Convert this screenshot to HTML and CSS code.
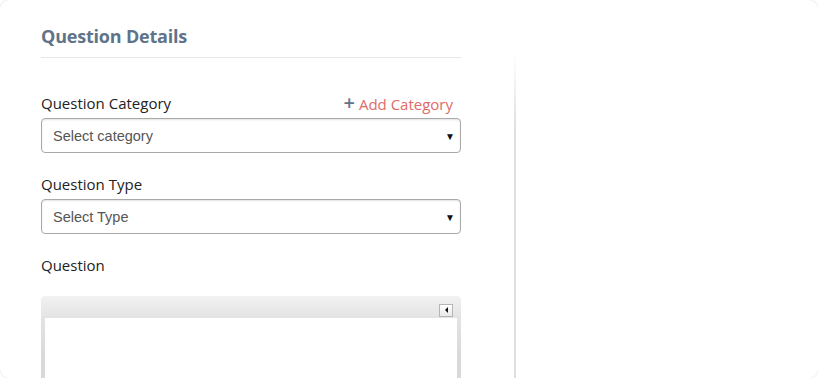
FILE: index.html
```html
<!DOCTYPE html>
<html>
<head>
    <title>Question Details</title>
    <link rel="stylesheet" href="styles.css">
</head>
<body>
    <div class="card">
        <div class="form-col">
            <h3 class="section-title">Question Details</h3>

            <div class="field field-first">
                <div class="label-row">
                    <label for="questionCategory">Question Category</label>
                    <a href="#" class="add-link"><span class="plus">+</span> Add Category</a>
                </div>
                <div class="select-box">
                    <span class="select-text">Select category</span>
                    <span class="select-arrow">&#9660;</span>
                </div>
            </div>

            <div class="field">
                <div class="label-row">
                    <label for="questionType">Question Type</label>
                </div>
                <div class="select-box">
                    <span class="select-text">Select Type</span>
                    <span class="select-arrow">&#9660;</span>
                </div>
            </div>

            <div class="field">
                <div class="label-row">
                    <label>Question</label>
                </div>
            </div>

            <!-- rich text editor -->
            <div class="editor">
                <div class="editor-toolbar">
                    <span class="collapse-btn">
                        <svg width="5" height="6" viewBox="0 0 5 6"><path d="M4 0 L1 3 L4 6 Z" fill="#111"/></svg>
                    </span>
                </div>
                <div class="editor-body"></div>
            </div>
        </div>

        <div class="side-col"></div>
    </div>
</body>
</html>
```

FILE: styles.css
```css
html, body {
    height: 100%;
}

body {
    margin: 0;
    background-color: #fff;
    font-family: "Open Sans", Arial, sans-serif;
}

.card {
    box-sizing: border-box;
    height: 100%;
    display: flex;
    padding-left: 41px;
    border-radius: 9px;
    box-shadow: 0 0 2px rgba(0, 0, 0, 0.18);
    overflow: hidden;
}

.form-col {
    width: 420px;
    padding-top: 24px;
}

.section-title {
    margin: 0;
    padding-bottom: 9px;
    font-size: 18px;
    line-height: 24px;
    font-weight: 700;
    color: #5f7389;
    border-bottom: 1px solid #e6e6e6;
    letter-spacing: -0.2px;
}

.field {
    margin-top: 20px;
}

.field-first {
    margin-top: 34px;
}

.label-row {
    display: flex;
    justify-content: space-between;
    align-items: center;
    height: 22px;
    margin-bottom: 4px;
}

label {
    font-size: 15px;
    color: #222;
}

.add-link {
    font-size: 15px;
    color: #e06a68;
    text-decoration: none;
    margin-right: 8px;
}

.add-link .plus {
    color: #5f7389;
    font-size: 20px;
    font-weight: 600;
    line-height: 1;
}

.select-box {
    box-sizing: border-box;
    height: 35px;
    display: flex;
    align-items: center;
    justify-content: space-between;
    padding: 0 5px 0 11px;
    border: 1px solid #a9a9a9;
    border-radius: 4px;
    box-shadow: inset 0 1px 2px rgba(0, 0, 0, 0.12);
    background-color: #fff;
}

.select-text {
    font-family: "Liberation Sans", Arial, sans-serif;
    font-size: 14.5px;
    color: #555;
}

.select-arrow {
    font-size: 10px;
    color: #111;
}

.editor {
    margin-top: 20px;
    height: 120px;
    border-radius: 4px 4px 0 0;
    background: linear-gradient(to bottom, #f2f2f2, #e3e3e3 22px, #d9d9d9 60px);
    padding: 0 4px;
}

.editor-toolbar {
    height: 22px;
    display: flex;
    justify-content: flex-end;
    align-items: center;
    padding-right: 4px;
}

.collapse-btn {
    box-sizing: border-box;
    width: 14px;
    height: 13px;
    margin-top: 6px;
    display: flex;
    align-items: center;
    justify-content: center;
    border: 1px solid #b5b5b5;
    background: linear-gradient(to bottom, #fff, #e8e8e8);
}

.editor-body {
    background-color: #fff;
    height: 100%;
}

.side-col {
    margin-left: 53px;
    flex: 1;
    border-left: 2px solid transparent;
    border-image: linear-gradient(to bottom, rgba(222, 222, 222, 0) 55px, #dedede 130px) 1;
}
```
